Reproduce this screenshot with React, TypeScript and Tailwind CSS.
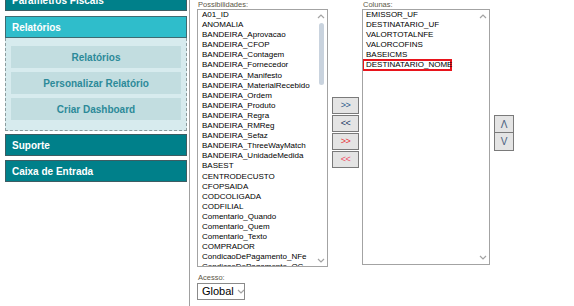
const possibilidades = [
  'A01_ID',
  'ANOMALIA',
  'BANDEIRA_Aprovacao',
  'BANDEIRA_CFOP',
  'BANDEIRA_Contagem',
  'BANDEIRA_Fornecedor',
  'BANDEIRA_Manifesto',
  'BANDEIRA_MaterialRecebido',
  'BANDEIRA_Ordem',
  'BANDEIRA_Produto',
  'BANDEIRA_Regra',
  'BANDEIRA_RMReg',
  'BANDEIRA_Sefaz',
  'BANDEIRA_ThreeWayMatch',
  'BANDEIRA_UnidadeMedida',
  'BASEST',
  'CENTRODECUSTO',
  'CFOPSAIDA',
  'CODCOLIGADA',
  'CODFILIAL',
  'Comentario_Quando',
  'Comentario_Quem',
  'Comentario_Texto',
  'COMPRADOR',
  'CondicaoDePagamento_NFe',
  'CondicaoDePagamento_OC',
]

const colunas = ['EMISSOR_UF', 'DESTINATARIO_UF', 'VALORTOTALNFE', 'VALORCOFINS', 'BASEICMS', 'DESTINATARIO_NOME']

function Chevron({ up }: { up?: boolean }) {
  return (
    <svg width="8" height="5" viewBox="0 0 8 5" className="block shrink-0">
      <path d={up ? 'M1 4 L4 1 L7 4' : 'M1 1 L4 4 L7 1'} fill="none" stroke="#a3a3a3" strokeWidth="1.2" />
    </svg>
  )
}

function NavBar({ label }: { label: string }) {
  return (
    <div className="h-[22px] border border-[#3d5d63] bg-[#00808a] text-white font-bold text-[10px] pl-[6px] flex items-center">
      {label}
    </div>
  )
}

function SubButton({ label }: { label: string }) {
  return (
    <div className="h-[22px] bg-[#c2dde0] text-[#2c8a99] font-bold text-[10px] flex items-center justify-center">
      {label}
    </div>
  )
}

function MoveButton({ label, color }: { label: string; color: string }) {
  return (
    <div className={`h-[17px] border border-[#7a7a7a] bg-[#e4e4e4] flex items-center justify-center text-[9px] tracking-[-0.5px] ${color}`}>
      {label}
    </div>
  )
}

export default function App() {
  return (
    <div className="w-[574px] h-[306px] bg-white flex overflow-hidden" style={{ fontFamily: '"Liberation Sans", Arial, sans-serif' }}>
      {/* Sidebar */}
      <div className="w-[190px] h-full shrink-0 border-r border-[#a0a0a0] pl-[5px] pr-[2px]">
        <div className="-mt-[11px]">
          <NavBar label="Parâmetros Fiscais" />
        </div>
        <div className="mt-[5px] h-[22px] border border-[#3e6b72] bg-[#2fbdcb] text-white font-bold text-[10px] pl-[6px] flex items-center">
          Relatórios
        </div>
        <div className="border border-t-0 border-dashed border-[#8c9b9d] bg-[#d7ebee] pt-[8px] pb-[10px] px-[5px] flex flex-col gap-[4px]">
          <SubButton label="Relatórios" />
          <SubButton label="Personalizar Relatório" />
          <SubButton label="Criar Dashboard" />
        </div>
        <div className="mt-[3px]">
          <NavBar label="Suporte" />
        </div>
        <div className="mt-[4px]">
          <NavBar label="Caixa de Entrada" />
        </div>
      </div>

      {/* Main */}
      <div className="flex items-start pl-[7px]">
        <div className="w-[131px] shrink-0">
          <div className="h-[9px] text-[7.5px] leading-[9px] text-[#5c5747] pl-[1px]">Possibilidades:</div>
          <div className="h-[258px] border border-[#a3a3a3] flex overflow-hidden">
            <div className="flex-1 overflow-hidden pl-[4px] text-[8px] text-black">
              {possibilidades.map((p) => (
                <div key={p} className="h-[10.1px] leading-[10.1px] whitespace-nowrap">
                  {p}
                </div>
              ))}
            </div>
            <div className="w-[12px] flex flex-col items-center pt-[4px] pb-[3px]">
              <Chevron up />
              <div className="mt-[4px] w-[5px] h-[62px] rounded-full bg-[#c9d3de]" />
              <div className="flex-1" />
              <Chevron />
            </div>
          </div>
          <div className="mt-[7px] h-[8px] text-[7.5px] leading-[8px] text-[#5c5747] pl-[1px]">Acesso:</div>
          <div className="mt-[1px] h-[17px] w-[48px] border border-[#8a8a8a] flex items-center pl-[4px] gap-[3px] text-[11px] text-black">
            Global
            <Chevron />
          </div>
        </div>

        <div className="w-[27px] ml-[4px] mt-[97px] flex flex-col gap-[1px]">
          <MoveButton label=">>" color="text-[#2b5a8c]" />
          <MoveButton label="<<" color="text-[#233a66]" />
          <MoveButton label=">>" color="text-[#e8353a]" />
          <MoveButton label="<<" color="text-[#f0506a]" />
        </div>

        <div className="w-[128px] ml-[3px] shrink-0">
          <div className="h-[9px] text-[7.5px] leading-[9px] text-[#5c5747] pl-[1px]">Colunas:</div>
          <div className="h-[256px] border border-[#a3a3a3] flex overflow-hidden">
            <div className="flex-1 overflow-hidden text-[8px] text-black">
              {colunas.map((c, i) =>
                i === colunas.length - 1 ? (
                  <div key={c} className="h-[12px] -mt-[1px] w-[90px] -ml-[1px] border-2 border-[#e8141c] pl-[2px] leading-[8px] whitespace-nowrap">
                    {c}
                  </div>
                ) : (
                  <div key={c} className="h-[10.1px] leading-[10.1px] pl-[3px] whitespace-nowrap">
                    {c}
                  </div>
                ),
              )}
            </div>
            <div className="w-[12px] flex flex-col items-center pt-[4px] pb-[4px]">
              <Chevron up />
              <div className="flex-1" />
              <Chevron />
            </div>
          </div>
        </div>

        <div className="w-[20px] ml-[4px] mt-[115px] flex flex-col">
          <div className="h-[18px] border border-[#7a7a7a] bg-[#e4e4e4] flex items-center justify-center text-[10px] text-[#4a5f80]">Λ</div>
          <div className="h-[18px] border border-t-0 border-[#7a7a7a] bg-[#e4e4e4] flex items-center justify-center text-[10px] text-[#4a5f80]">V</div>
        </div>
      </div>
    </div>
  )
}
